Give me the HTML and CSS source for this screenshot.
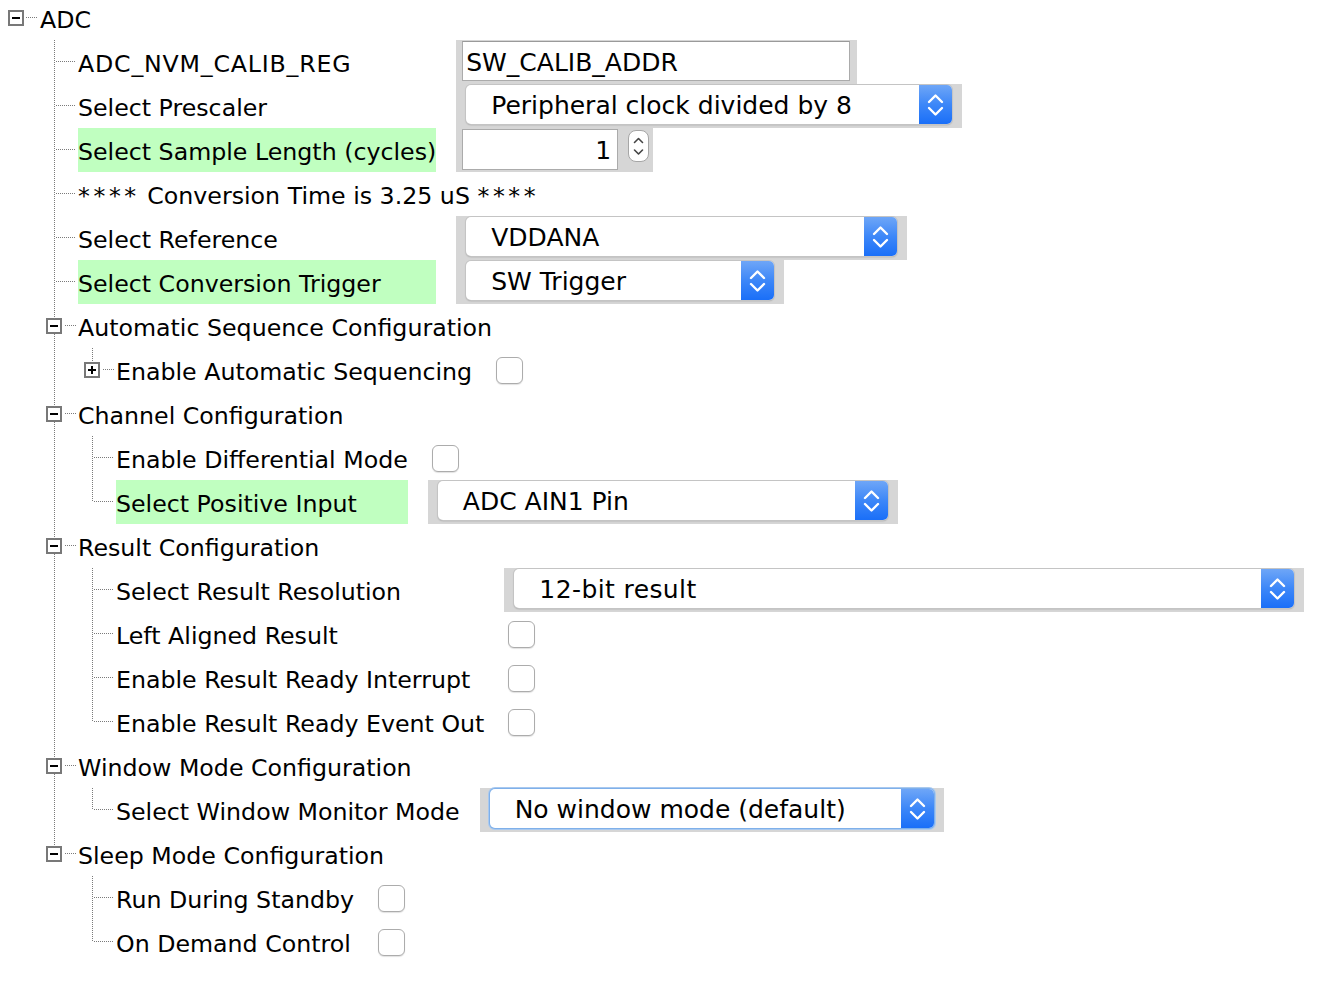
FILE: index.html
```html
<!DOCTYPE html>
<html>
<head>
<meta charset="utf-8">
<title>ADC</title>
<link rel="stylesheet" href="styles.css">
</head>
<body>
<div class="tree">
  <div class="row root">
    <span class="conn rootc"><span class="box minus"></span></span>
    <span class="label">ADC</span>
  </div>

  <div class="grp">
    <div class="lc"><span class="ind"></span><span class="conn leaf"></span><span class="label caps">ADC_NVM_CALIB_REG</span></div>
    <div class="cell gray tfcell"><span class="tf w-calib">SW_CALIB_ADDR</span></div>

    <div class="lc"><span class="ind"></span><span class="conn leaf"></span><span class="label">Select Prescaler</span></div>
    <div class="cell gray"><div class="dd w-presc"><span class="ddt">Peripheral clock divided by 8</span><span class="ddb"><svg viewBox="0 0 33 39" width="33" height="39"><path d="M10 17 L16.5 10.5 L23 17 M10 23 L16.5 29.5 L23 23" fill="none" stroke="#fff" stroke-width="2.4" stroke-linecap="round" stroke-linejoin="round"/></svg></span></div></div>

    <div class="lc"><span class="ind"></span><span class="conn leaf"></span><span class="label hl">Select Sample Length (cycles)</span></div>
    <div class="cell gray spcell"><span class="spf">1</span><span class="spb"><svg viewBox="0 0 21 32" width="21" height="32"><path d="M6.5 12.5 L10.5 8.5 L14.5 12.5 M6.5 20 L10.5 24 L14.5 20" fill="none" stroke="#444" stroke-width="1.6" stroke-linecap="round" stroke-linejoin="round"/></svg></span></div>

    <div class="lc span"><span class="ind"></span><span class="conn leaf"></span><span class="label"><span class="txt"><span class="stars">****</span> Conversion Time is 3.25 uS <span class="stars">****</span></span></span></div>

    <div class="lc"><span class="ind"></span><span class="conn leaf"></span><span class="label">Select Reference</span></div>
    <div class="cell gray"><div class="dd w-vdd"><span class="ddt">VDDANA</span><span class="ddb"><svg viewBox="0 0 33 39" width="33" height="39"><path d="M10 17 L16.5 10.5 L23 17 M10 23 L16.5 29.5 L23 23" fill="none" stroke="#fff" stroke-width="2.4" stroke-linecap="round" stroke-linejoin="round"/></svg></span></div></div>

    <div class="lc"><span class="ind"></span><span class="conn leaf"></span><span class="label hl">Select Conversion Trigger</span></div>
    <div class="cell gray"><div class="dd w-trig"><span class="ddt">SW Trigger</span><span class="ddb"><svg viewBox="0 0 33 39" width="33" height="39"><path d="M10 17 L16.5 10.5 L23 17 M10 23 L16.5 29.5 L23 23" fill="none" stroke="#fff" stroke-width="2.4" stroke-linecap="round" stroke-linejoin="round"/></svg></span></div></div>
  </div>

  <div class="row">
    <span class="ind"></span><span class="conn head"><span class="box minus"></span></span>
    <span class="label">Automatic Sequence Configuration</span>
  </div>
  <div class="grp">
    <div class="lc"><span class="ind"></span><span class="guide"></span><span class="conn head last"><span class="box plus"></span></span><span class="label">Enable Automatic Sequencing</span></div>
    <div class="cell cbcell"><span class="cb"></span></div>
  </div>

  <div class="row">
    <span class="ind"></span><span class="conn head"><span class="box minus"></span></span>
    <span class="label">Channel Configuration</span>
  </div>
  <div class="grp">
    <div class="lc"><span class="ind"></span><span class="guide"></span><span class="conn leaf"></span><span class="label">Enable Differential Mode</span></div>
    <div class="cell cbcell"><span class="cb"></span></div>

    <div class="lc"><span class="ind"></span><span class="guide"></span><span class="conn leaf last"></span><span class="label hl">Select Positive Input</span></div>
    <div class="cell gray"><div class="dd w-ain"><span class="ddt">ADC AIN1 Pin</span><span class="ddb"><svg viewBox="0 0 33 39" width="33" height="39"><path d="M10 17 L16.5 10.5 L23 17 M10 23 L16.5 29.5 L23 23" fill="none" stroke="#fff" stroke-width="2.4" stroke-linecap="round" stroke-linejoin="round"/></svg></span></div></div>
  </div>

  <div class="row">
    <span class="ind"></span><span class="conn head"><span class="box minus"></span></span>
    <span class="label">Result Configuration</span>
  </div>
  <div class="grp">
    <div class="lc"><span class="ind"></span><span class="guide"></span><span class="conn leaf"></span><span class="label">Select Result Resolution</span></div>
    <div class="cell gray"><div class="dd w-res"><span class="ddt cond">12-bit result</span><span class="ddb"><svg viewBox="0 0 33 39" width="33" height="39"><path d="M10 17 L16.5 10.5 L23 17 M10 23 L16.5 29.5 L23 23" fill="none" stroke="#fff" stroke-width="2.4" stroke-linecap="round" stroke-linejoin="round"/></svg></span></div></div>

    <div class="lc"><span class="ind"></span><span class="guide"></span><span class="conn leaf"></span><span class="label">Left Aligned Result</span></div>
    <div class="cell cbcell"><span class="cb"></span></div>

    <div class="lc"><span class="ind"></span><span class="guide"></span><span class="conn leaf"></span><span class="label">Enable Result Ready Interrupt</span></div>
    <div class="cell cbcell"><span class="cb"></span></div>

    <div class="lc"><span class="ind"></span><span class="guide"></span><span class="conn leaf last"></span><span class="label">Enable Result Ready Event Out</span></div>
    <div class="cell cbcell"><span class="cb"></span></div>
  </div>

  <div class="row">
    <span class="ind"></span><span class="conn head"><span class="box minus"></span></span>
    <span class="label">Window Mode Configuration</span>
  </div>
  <div class="grp">
    <div class="lc"><span class="ind"></span><span class="guide"></span><span class="conn leaf last"></span><span class="label">Select Window Monitor Mode</span></div>
    <div class="cell gray"><div class="dd focus w-win"><span class="ddt">No window mode (default)</span><span class="ddb"><svg viewBox="0 0 33 39" width="33" height="39"><path d="M10 17 L16.5 10.5 L23 17 M10 23 L16.5 29.5 L23 23" fill="none" stroke="#fff" stroke-width="2.4" stroke-linecap="round" stroke-linejoin="round"/></svg></span></div></div>
  </div>

  <div class="row">
    <span class="ind"></span><span class="conn head last"><span class="box minus"></span></span>
    <span class="label">Sleep Mode Configuration</span>
  </div>
  <div class="grp">
    <div class="lc"><span class="ind"></span><span class="ind"></span><span class="conn leaf"></span><span class="label">Run During Standby</span></div>
    <div class="cell cbcell"><span class="cb"></span></div>

    <div class="lc"><span class="ind"></span><span class="ind"></span><span class="conn leaf last"></span><span class="label">On Demand Control</span></div>
    <div class="cell cbcell"><span class="cb"></span></div>
  </div>
</div>
</body>
</html>
```

FILE: styles.css
```css
html, body {
  margin: 0;
  padding: 0;
  background: #ffffff;
}

body {
  font-family: "DejaVu Sans", Verdana, sans-serif;
  font-size: 23.7px;
  color: #000;
}

.tree {
  padding-left: 8px;
  display: flex;
  flex-direction: column;
  align-items: flex-start;
}

.row {
  display: flex;
  height: 44px;
  align-items: stretch;
}

.row.root {
  height: 40px;
  padding-bottom: 4px;
  box-sizing: border-box;
}

.grp {
  display: grid;
  grid-template-columns: max-content max-content;
  column-gap: 20px;
}

.lc {
  display: flex;
  height: 44px;
  align-items: stretch;
}

.lc.span {
  grid-column: 1 / -1;
}

.label {
  display: flex;
  align-items: center;
  white-space: nowrap;
  padding-top: 4px;
  box-sizing: border-box;
}

.label.caps {
  letter-spacing: 0.8px;
}

.stars {
  letter-spacing: 3.6px;
}

.lc .label {
  flex: 1;
}

.label.hl {
  background: #c0ffc0;
}

/* tree connectors */
.ind {
  width: 38px;
  flex: none;
}

.guide {
  width: 38px;
  flex: none;
  background: repeating-linear-gradient(180deg, #7a7a7a 0 1px, transparent 1px 2px) 8px 0 / 1px 100% no-repeat;
}

.conn {
  width: 32px;
  flex: none;
  display: flex;
  align-items: center;
}

.conn.leaf {
  background:
    repeating-linear-gradient(180deg, #7a7a7a 0 1px, transparent 1px 2px) 8px 0 / 1px 100% no-repeat,
    repeating-linear-gradient(90deg, #7a7a7a 0 1px, transparent 1px 2px) 10px 21px / 20px 1px no-repeat;
}

.conn.leaf.last {
  background:
    repeating-linear-gradient(180deg, #7a7a7a 0 1px, transparent 1px 2px) 8px 0 / 1px 22px no-repeat,
    repeating-linear-gradient(90deg, #7a7a7a 0 1px, transparent 1px 2px) 10px 21px / 20px 1px no-repeat;
}

.conn.head {
  background:
    repeating-linear-gradient(180deg, #7a7a7a 0 1px, transparent 1px 2px) 8px 0 / 1px 100% no-repeat,
    repeating-linear-gradient(90deg, #7a7a7a 0 1px, transparent 1px 2px) 19px 21px / 11px 1px no-repeat;
}

.conn.head.last {
  background:
    repeating-linear-gradient(180deg, #7a7a7a 0 1px, transparent 1px 2px) 8px 0 / 1px 16px no-repeat,
    repeating-linear-gradient(90deg, #7a7a7a 0 1px, transparent 1px 2px) 19px 21px / 11px 1px no-repeat;
}

.conn.rootc {
  background: repeating-linear-gradient(90deg, #7a7a7a 0 1px, transparent 1px 2px) 18px 17px / 12px 1px no-repeat;
}

.box {
  width: 16px;
  height: 16px;
  margin-left: 0;
  box-sizing: border-box;
  border: 2px solid #787878;
  background: #fff;
  display: flex;
  align-items: center;
  justify-content: center;
  position: relative;
}

.box::before {
  content: "";
  width: 8px;
  height: 2px;
  background: #000;
}

.box.plus::after {
  content: "";
  position: absolute;
  width: 2px;
  height: 8px;
  background: #000;
  left: 5px;
  top: 2px;
}

/* controls */
.cell {
  justify-self: start;
  height: 44px;
  display: flex;
  align-items: flex-start;
  box-sizing: border-box;
}

.cell.gray {
  background: #d6d6d6;
  padding: 0 10px;
}

.tfcell.gray {
  padding: 0 7px 0 6px;
}

.tf {
  margin-top: 1px;
  height: 40px;
  box-sizing: border-box;
  border: 1px solid #ababab;
  border-top-color: #9a9a9a;
  background: #fff;
  padding-left: 3px;
  padding-top: 2px;
  display: flex;
  align-items: center;
  font-size: 25px;
}

.w-calib { width: 388px; }

.dd {
  margin-top: 1px;
  height: 39px;
  box-sizing: border-box;
  display: flex;
  border-radius: 5px;
  background: #fff;
  box-shadow: 0 0 0 1px #c4c4c4, 0 1px 1.5px rgba(0, 0, 0, 0.35);
}

.dd.focus {
  box-shadow: 0 0 0 1px #7fb0ea, 0 0 0 2px #a9c9ef;
}

.ddt {
  flex: 1;
  display: flex;
  align-items: center;
  padding-left: 25px;
  padding-top: 1px;
  font-size: 25px;
  white-space: nowrap;
}

.ddt.cond {
  letter-spacing: 0.4px;
}

.ddb {
  width: 33px;
  flex: none;
  border-radius: 0 5px 5px 0;
  background: linear-gradient(180deg, #6ea6f7 0%, #3d87f8 50%, #1a6ff8 100%);
  display: flex;
}

.w-presc { width: 486px; }
.w-vdd { width: 431px; }
.w-trig { width: 308px; }
.w-ain { width: 450px; }
.w-res { width: 780px; }
.w-win { width: 444px; }

.spcell.gray {
  padding: 0 4px 0 6px;
}

.spf {
  margin-top: 1px;
  width: 156px;
  height: 41px;
  box-sizing: border-box;
  border: 1px solid #ababab;
  background: #fff;
  display: flex;
  align-items: center;
  justify-content: flex-end;
  padding-right: 6px;
  padding-top: 2px;
  font-size: 25px;
}

.spb {
  margin: 2px 0 0 10px;
  width: 21px;
  height: 32px;
  box-sizing: border-box;
  border: 1px solid #a6a6a6;
  border-radius: 8px;
  background: #fff;
  display: flex;
  align-items: center;
  justify-content: center;
  overflow: hidden;
}

.spb svg {
  flex: none;
}

.cbcell {
  padding-left: 4px;
  align-items: center;
}

.cb {
  width: 27px;
  height: 27px;
  box-sizing: border-box;
  border: 1px solid #acacac;
  border-radius: 6px;
  background: #fff;
  box-shadow: 0 1px 1px rgba(0, 0, 0, 0.12);
}
```
